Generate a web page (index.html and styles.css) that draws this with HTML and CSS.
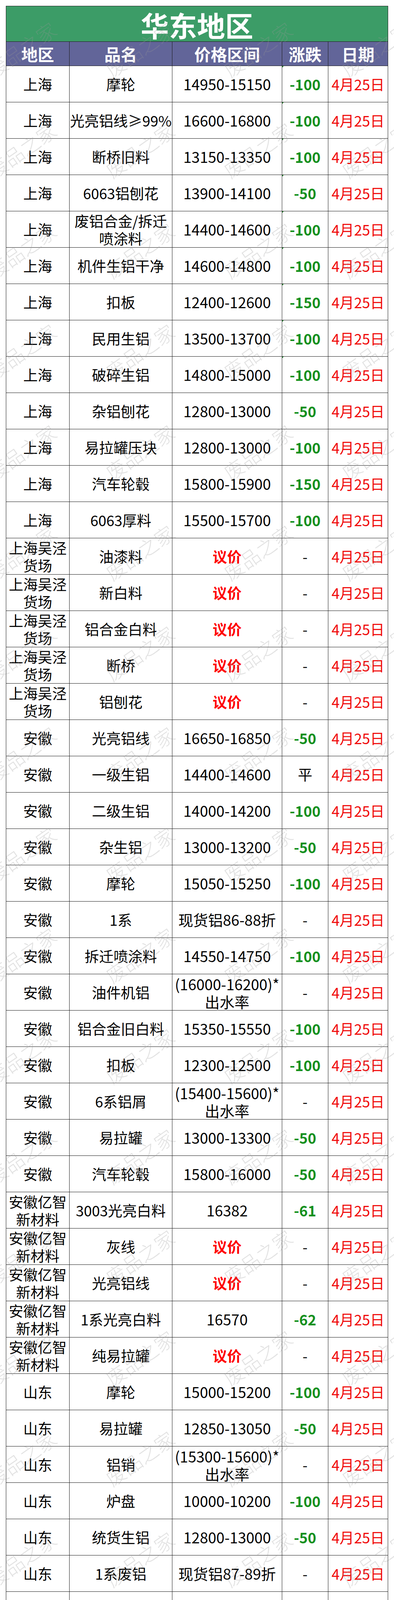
FILE: index.html
```html
<!DOCTYPE html>
<html lang="zh-CN">
<head>
<meta charset="utf-8">
<title>华东地区</title>
<link rel="stylesheet" href="styles.css">
</head>
<body>
<div class="page">
  <div class="sheet">
    <div class="title">华东地区</div>
    <div class="row head"><div class="c">地区</div><div class="c">品名</div><div class="c">价格区间</div><div class="c">涨跌</div><div class="c">日期</div></div>

    <div class="row"><div class="c">上海</div><div class="c">摩轮</div><div class="c v">14950-15150</div><div class="c g tri">-100</div><div class="c t">4月25日</div></div>
    <div class="row"><div class="c">上海</div><div class="c">光亮铝线≥99%</div><div class="c v">16600-16800</div><div class="c g tri">-100</div><div class="c t">4月25日</div></div>
    <div class="row"><div class="c">上海</div><div class="c">断桥旧料</div><div class="c v">13150-13350</div><div class="c g tri">-100</div><div class="c t">4月25日</div></div>
    <div class="row"><div class="c">上海</div><div class="c">6063铝刨花</div><div class="c v">13900-14100</div><div class="c g tri">-50</div><div class="c t">4月25日</div></div>
    <div class="row"><div class="c">上海</div><div class="c m">废铝合金/拆迁<br>喷涂料</div><div class="c v">14400-14600</div><div class="c g tri">-100</div><div class="c t">4月25日</div></div>
    <div class="row"><div class="c">上海</div><div class="c">机件生铝干净</div><div class="c v">14600-14800</div><div class="c g tri">-100</div><div class="c t">4月25日</div></div>
    <div class="row"><div class="c">上海</div><div class="c">扣板</div><div class="c v">12400-12600</div><div class="c g tri">-150</div><div class="c t">4月25日</div></div>
    <div class="row"><div class="c">上海</div><div class="c">民用生铝</div><div class="c v">13500-13700</div><div class="c g tri">-100</div><div class="c t">4月25日</div></div>
    <div class="row"><div class="c">上海</div><div class="c">破碎生铝</div><div class="c v">14800-15000</div><div class="c g tri">-100</div><div class="c t">4月25日</div></div>
    <div class="row"><div class="c">上海</div><div class="c">杂铝刨花</div><div class="c v">12800-13000</div><div class="c g">-50</div><div class="c t">4月25日</div></div>
    <div class="row"><div class="c">上海</div><div class="c">易拉罐压块</div><div class="c v">12800-13000</div><div class="c g">-100</div><div class="c t">4月25日</div></div>
    <div class="row"><div class="c">上海</div><div class="c">汽车轮毂</div><div class="c v">15800-15900</div><div class="c g">-150</div><div class="c t">4月25日</div></div>
    <div class="row"><div class="c">上海</div><div class="c">6063厚料</div><div class="c v">15500-15700</div><div class="c g">-100</div><div class="c t">4月25日</div></div>
    <div class="row"><div class="c m">上海吴泾<br>货场</div><div class="c">油漆料</div><div class="c y">议价</div><div class="c">-</div><div class="c t">4月25日</div></div>
    <div class="row"><div class="c m">上海吴泾<br>货场</div><div class="c">新白料</div><div class="c y">议价</div><div class="c">-</div><div class="c t">4月25日</div></div>
    <div class="row"><div class="c m">上海吴泾<br>货场</div><div class="c">铝合金白料</div><div class="c y">议价</div><div class="c">-</div><div class="c t">4月25日</div></div>
    <div class="row"><div class="c m">上海吴泾<br>货场</div><div class="c">断桥</div><div class="c y">议价</div><div class="c">-</div><div class="c t">4月25日</div></div>
    <div class="row"><div class="c m">上海吴泾<br>货场</div><div class="c">铝刨花</div><div class="c y">议价</div><div class="c">-</div><div class="c t">4月25日</div></div>
    <div class="row"><div class="c">安徽</div><div class="c">光亮铝线</div><div class="c v">16650-16850</div><div class="c g">-50</div><div class="c t">4月25日</div></div>
    <div class="row"><div class="c">安徽</div><div class="c">一级生铝</div><div class="c v">14400-14600</div><div class="c">平</div><div class="c t">4月25日</div></div>
    <div class="row"><div class="c">安徽</div><div class="c">二级生铝</div><div class="c v">14000-14200</div><div class="c g">-100</div><div class="c t">4月25日</div></div>
    <div class="row"><div class="c">安徽</div><div class="c">杂生铝</div><div class="c v">13000-13200</div><div class="c g">-50</div><div class="c t">4月25日</div></div>
    <div class="row"><div class="c">安徽</div><div class="c">摩轮</div><div class="c v">15050-15250</div><div class="c g">-100</div><div class="c t">4月25日</div></div>
    <div class="row"><div class="c">安徽</div><div class="c">1系</div><div class="c v">现货铝86-88折</div><div class="c">-</div><div class="c t">4月25日</div></div>
    <div class="row"><div class="c">安徽</div><div class="c">拆迁喷涂料</div><div class="c v">14550-14750</div><div class="c g">-100</div><div class="c t">4月25日</div></div>
    <div class="row"><div class="c">安徽</div><div class="c">油件机铝</div><div class="c v m">(16000-16200)*<br>出水率</div><div class="c">-</div><div class="c t">4月25日</div></div>
    <div class="row"><div class="c">安徽</div><div class="c">铝合金旧白料</div><div class="c v">15350-15550</div><div class="c g">-100</div><div class="c t">4月25日</div></div>
    <div class="row"><div class="c">安徽</div><div class="c">扣板</div><div class="c v">12300-12500</div><div class="c g">-100</div><div class="c t">4月25日</div></div>
    <div class="row"><div class="c">安徽</div><div class="c">6系铝屑</div><div class="c v m">(15400-15600)*<br>出水率</div><div class="c">-</div><div class="c t">4月25日</div></div>
    <div class="row"><div class="c">安徽</div><div class="c">易拉罐</div><div class="c v">13000-13300</div><div class="c g">-50</div><div class="c t">4月25日</div></div>
    <div class="row"><div class="c">安徽</div><div class="c">汽车轮毂</div><div class="c v">15800-16000</div><div class="c g">-50</div><div class="c t">4月25日</div></div>
    <div class="row"><div class="c m">安徽亿智<br>新材料</div><div class="c">3003光亮白料</div><div class="c v">16382</div><div class="c g">-61</div><div class="c t">4月25日</div></div>
    <div class="row"><div class="c m">安徽亿智<br>新材料</div><div class="c">灰线</div><div class="c y">议价</div><div class="c">-</div><div class="c t">4月25日</div></div>
    <div class="row"><div class="c m">安徽亿智<br>新材料</div><div class="c">光亮铝线</div><div class="c y">议价</div><div class="c">-</div><div class="c t">4月25日</div></div>
    <div class="row"><div class="c m">安徽亿智<br>新材料</div><div class="c">1系光亮白料</div><div class="c v">16570</div><div class="c g">-62</div><div class="c t">4月25日</div></div>
    <div class="row"><div class="c m">安徽亿智<br>新材料</div><div class="c">纯易拉罐</div><div class="c y">议价</div><div class="c">-</div><div class="c t">4月25日</div></div>
    <div class="row"><div class="c">山东</div><div class="c">摩轮</div><div class="c v">15000-15200</div><div class="c g">-100</div><div class="c t">4月25日</div></div>
    <div class="row"><div class="c">山东</div><div class="c">易拉罐</div><div class="c v">12850-13050</div><div class="c g">-50</div><div class="c t">4月25日</div></div>
    <div class="row"><div class="c">山东</div><div class="c">铝销</div><div class="c v m">(15300-15600)*<br>出水率</div><div class="c">-</div><div class="c t">4月25日</div></div>
    <div class="row"><div class="c">山东</div><div class="c">炉盘</div><div class="c v">10000-10200</div><div class="c g">-100</div><div class="c t">4月25日</div></div>
    <div class="row"><div class="c">山东</div><div class="c">统货生铝</div><div class="c v">12800-13000</div><div class="c g">-50</div><div class="c t">4月25日</div></div>
    <div class="row"><div class="c">山东</div><div class="c">1系废铝</div><div class="c v">现货铝87-89折</div><div class="c">-</div><div class="c t">4月25日</div></div>
    <div class="row"><div class="c">山东临沂</div><div class="c">活塞</div><div class="c v">15000-15200</div><div class="c g">-100</div><div class="c t">4月25日</div></div>
    <div class="row"><div class="c">山东临沂</div><div class="c">拆迁喷涂料</div><div class="c v">14450-14650</div><div class="c g">-50</div><div class="c t">4月25日</div></div>
    <div class="row"><div class="c">山东临沂</div><div class="c">机铝(摩托)</div><div class="c v">14250-14450</div><div class="c g">-50</div><div class="c t">4月25日</div></div>
    <div class="row"><div class="c">山东临沂</div><div class="c">6063合金厚料</div><div class="c v">15550-15750</div><div class="c g">-50</div><div class="c t">4月25日</div></div>
    <div class="row"><div class="c">山东临沂</div><div class="c">光亮铝线</div><div class="c v">16600-16800</div><div class="c">平</div><div class="c t">4月25日</div></div>
    <div class="row"><div class="c">江苏</div><div class="c">铝合金旧白料</div><div class="c v">15150-15350</div><div class="c g">-100</div><div class="c t">4月25日</div></div>
    <div class="row"><div class="c">江苏</div><div class="c">摩轮</div><div class="c v">15000-15200</div><div class="c g">-100</div><div class="c t">4月25日</div></div>
    <div class="row"><div class="c">江苏</div><div class="c">7系铝屑</div><div class="c v m">(14600-14800)*<br>出水率</div><div class="c">-</div><div class="c t">4月25日</div></div>
    <div class="row"><div class="c">江苏</div><div class="c">破碎杂机铝</div><div class="c v">14000-14200</div><div class="c g">-100</div><div class="c t">4月25日</div></div>
    <div class="row"><div class="c">江苏</div><div class="c">6063铝刨花</div><div class="c v">13850-14050</div><div class="c g">-100</div><div class="c t">4月25日</div></div>
    <div class="row"><div class="c">江苏</div><div class="c">喷涂拆迁旧料</div><div class="c v">14400-14600</div><div class="c g">-100</div><div class="c t">4月25日</div></div>
    <div class="row"><div class="c">江苏</div><div class="c">缸体/缸盖</div><div class="c v">14900-15100</div><div class="c g">-100</div><div class="c t">4月25日</div></div>
    <div class="row"><div class="c">江苏</div><div class="c">油件机铝</div><div class="c v">13100-13300</div><div class="c">平</div><div class="c t">4月25日</div></div>
    <div class="row"><div class="c">江苏</div><div class="c">断桥旧料</div><div class="c v">13200-13400</div><div class="c g">-100</div><div class="c t">4月25日</div></div>
    <div class="row"><div class="c">江苏</div><div class="c">破碎熟铝</div><div class="c v">14700-14900</div><div class="c g">-100</div><div class="c t">4月25日</div></div>
    <div class="row"><div class="c">江苏</div><div class="c">易拉罐压块</div><div class="c v">12900-13100</div><div class="c g">-50</div><div class="c t">4月25日</div></div>
    <div class="row"><div class="c">江苏</div><div class="c">活塞</div><div class="c v">15000-15200</div><div class="c g">-100</div><div class="c t">4月25日</div></div>
    <div class="row"><div class="c">江苏</div><div class="c">混合合金屑</div><div class="c v m">(14900-15100)*<br>出水率</div><div class="c">-</div><div class="c t">4月25日</div></div>
    <div class="row"><div class="c">江苏</div><div class="c">机生铝不带油</div><div class="c v">14400-14600</div><div class="c g">-100</div><div class="c t">4月25日</div></div>
    <div class="row"><div class="c m">泰州南元<br>铝材</div><div class="c">3003新白料</div><div class="c v">现货铝86-87折</div><div class="c">-</div><div class="c t">4月25日</div></div>
    <div class="row"><div class="c m">泰州南元<br>铝材</div><div class="c">6系氧化料</div><div class="c v">现货铝86-87折</div><div class="c">-</div><div class="c t">4月25日</div></div>
    <div class="row"><div class="c m">泰州南元<br>铝材</div><div class="c">6系喷涂料</div><div class="c v">现货铝86-87折</div><div class="c">-</div><div class="c t">4月25日</div></div>
    <div class="row"><div class="c m">泰州南元<br>铝材</div><div class="c">6063新白料</div><div class="c v">现货铝86-87折</div><div class="c">-</div><div class="c t">4月25日</div></div>
    <div class="row"><div class="c m">泰州南元<br>铝材</div><div class="c">6系新白料带票</div><div class="c y">议价</div><div class="c">-</div><div class="c t">4月25日</div></div>
    <div class="row"><div class="c m">泰州南元<br>铝材</div><div class="c">6061新白料</div><div class="c v">现货铝86-87折</div><div class="c">-</div><div class="c t">4月25日</div></div>
    <div class="row"><div class="c m">泰州南元<br>铝材</div><div class="c">1100新白料</div><div class="c v">现货铝86-87折</div><div class="c">-</div><div class="c t">4月25日</div></div>
    <div class="row"><div class="c m">泰州南元<br>铝材</div><div class="c m">1060及1070新<br>白料</div><div class="c v">现货铝86-87折</div><div class="c">-</div><div class="c t">4月25日</div></div>
    <div class="row"><div class="c">江西</div><div class="c">易拉罐</div><div class="c v">13100-13300</div><div class="c g">-100</div><div class="c t">4月25日</div></div>
    <div class="row"><div class="c">江西</div><div class="c">民用生铝</div><div class="c v">14300-14500</div><div class="c g">-100</div><div class="c t">4月25日</div></div>
    <div class="row"><div class="c">江西</div><div class="c">摩轮</div><div class="c v">15000-15200</div><div class="c g">-100</div><div class="c t">4月25日</div></div>
    <div class="row"><div class="c">江西</div><div class="c">熟杂铝</div><div class="c v">13450-13650</div><div class="c">平</div><div class="c t">4月25日</div></div>
    <div class="row"><div class="c">江西</div><div class="c">汽车轮毂</div><div class="c v">15800-16000</div><div class="c g">-100</div><div class="c t">4月25日</div></div>
    <div class="row"><div class="c">江西</div><div class="c">机铝</div><div class="c v">14500-14700</div><div class="c g">-100</div><div class="c t">4月25日</div></div>
    <div class="row"><div class="c">江西</div><div class="c">铝合金旧白料</div><div class="c v">15200-15400</div><div class="c g">-100</div><div class="c t">4月25日</div></div>
    <div class="row"><div class="c">江西</div><div class="c">拆迁喷涂料</div><div class="c v">14550-14750</div><div class="c g">-100</div><div class="c t">4月25日</div></div>
    <div class="row"><div class="c">江西</div><div class="c">铝屑</div><div class="c v m">(15500-15700)*<br>出水率</div><div class="c">-</div><div class="c t">4月25日</div></div>
    <div class="row"><div class="c">江西</div><div class="c">破碎熟铝</div><div class="c v">14400-14600</div><div class="c g tri">-50</div><div class="c t">4月25日</div></div>
    <div class="row"><div class="c">江西</div><div class="c">机体</div><div class="c v">15300-15500</div><div class="c g tri">-100</div><div class="c t">4月25日</div></div>
    <div class="row"><div class="c">江西</div><div class="c">光亮铝线≥99%</div><div class="c v">16650-16850</div><div class="c g tri">-50</div><div class="c t">4月25日</div></div>
    <div class="row"><div class="c">江西</div><div class="c">活塞</div><div class="c v">15000-15200</div><div class="c g tri">-100</div><div class="c t">4月25日</div></div>
    <div class="row"><div class="c">江西</div><div class="c">铝卷门</div><div class="c v">13000-13200</div><div class="c g tri">-100</div><div class="c t">4月25日</div></div>
    <div class="row"><div class="c">江西</div><div class="c">破碎生铝</div><div class="c v">14700-14900</div><div class="c g tri">-100</div><div class="c t">4月25日</div></div>
  </div>

  <div class="wm" aria-hidden="true">
    <div class="wm-row"><span>废品之家</span><span>废品之家</span><span>废品之家</span><span>废品之家</span></div>
    <div class="wm-row"><span>废品之家</span><span>废品之家</span><span>废品之家</span><span>废品之家</span></div>
    <div class="wm-row"><span>废品之家</span><span>废品之家</span><span>废品之家</span><span>废品之家</span></div>
    <div class="wm-row"><span>废品之家</span><span>废品之家</span><span>废品之家</span><span>废品之家</span></div>
    <div class="wm-row"><span>废品之家</span><span>废品之家</span><span>废品之家</span><span>废品之家</span></div>
    <div class="wm-row"><span>废品之家</span><span>废品之家</span><span>废品之家</span><span>废品之家</span></div>
    <div class="wm-row"><span>废品之家</span><span>废品之家</span><span>废品之家</span><span>废品之家</span></div>
    <div class="wm-row"><span>废品之家</span><span>废品之家</span><span>废品之家</span><span>废品之家</span></div>
    <div class="wm-row"><span>废品之家</span><span>废品之家</span><span>废品之家</span><span>废品之家</span></div>
    <div class="wm-row"><span>废品之家</span><span>废品之家</span><span>废品之家</span><span>废品之家</span></div>
    <div class="wm-row"><span>废品之家</span><span>废品之家</span><span>废品之家</span><span>废品之家</span></div>
    <div class="wm-row"><span>废品之家</span><span>废品之家</span><span>废品之家</span><span>废品之家</span></div>
    <div class="wm-row"><span>废品之家</span><span>废品之家</span><span>废品之家</span><span>废品之家</span></div>
    <div class="wm-row"><span>废品之家</span><span>废品之家</span><span>废品之家</span><span>废品之家</span></div>
    <div class="wm-row"><span>废品之家</span><span>废品之家</span><span>废品之家</span><span>废品之家</span></div>
    <div class="wm-row"><span>废品之家</span><span>废品之家</span><span>废品之家</span><span>废品之家</span></div>
    <div class="wm-row"><span>废品之家</span><span>废品之家</span><span>废品之家</span><span>废品之家</span></div>
    <div class="wm-row"><span>废品之家</span><span>废品之家</span><span>废品之家</span><span>废品之家</span></div>
    <div class="wm-row"><span>废品之家</span><span>废品之家</span><span>废品之家</span><span>废品之家</span></div>
    <div class="wm-row"><span>废品之家</span><span>废品之家</span><span>废品之家</span><span>废品之家</span></div>
    <div class="wm-row"><span>废品之家</span><span>废品之家</span><span>废品之家</span><span>废品之家</span></div>
    <div class="wm-row"><span>废品之家</span><span>废品之家</span><span>废品之家</span><span>废品之家</span></div>
    <div class="wm-row"><span>废品之家</span><span>废品之家</span><span>废品之家</span><span>废品之家</span></div>
    <div class="wm-row"><span>废品之家</span><span>废品之家</span><span>废品之家</span><span>废品之家</span></div>
    <div class="wm-row"><span>废品之家</span><span>废品之家</span><span>废品之家</span><span>废品之家</span></div>
    <div class="wm-row"><span>废品之家</span><span>废品之家</span><span>废品之家</span><span>废品之家</span></div>
    <div class="wm-row"><span>废品之家</span><span>废品之家</span><span>废品之家</span><span>废品之家</span></div>
    <div class="wm-row"><span>废品之家</span><span>废品之家</span><span>废品之家</span><span>废品之家</span></div>
    <div class="wm-row"><span>废品之家</span><span>废品之家</span><span>废品之家</span><span>废品之家</span></div>
    <div class="wm-row"><span>废品之家</span><span>废品之家</span><span>废品之家</span><span>废品之家</span></div>
    <div class="wm-row"><span>废品之家</span><span>废品之家</span><span>废品之家</span><span>废品之家</span></div>
  </div>
</div>
</body>
</html>
```

FILE: styles.css
```css
* { box-sizing: border-box; }

html, body {
  margin: 0;
  padding: 0;
  background: #ffffff;
}

body {
  font-family: "Noto Sans CJK SC", "Noto Sans", "DejaVu Sans", sans-serif;
  color: #000;
}

.page {
  position: relative;
  width: 1008px;
  height: 7996px;
  padding: 15px 15px 0 15px;
  overflow: hidden;
}

.sheet {
  width: 978px;
  border-left: 1px solid #1c1c1c;
  border-top: 1px solid #1c1c1c;
}

.title {
  height: 91px;
  background: #3c9c67;
  color: #ffffff;
  font-size: 72px;
  font-weight: 700;
  line-height: 1;
  display: flex;
  align-items: center;
  justify-content: center;
  padding-top: 4px;
  border-right: 1px solid #1c1c1c;
  border-bottom: 1px solid #1c1c1c;
}

.row {
  display: grid;
  grid-template-columns: 162px 263px 281px 118px 153px;
  height: 93px;
}

.c {
  position: relative;
  display: flex;
  align-items: center;
  justify-content: center;
  text-align: center;
  border-right: 1px solid #1c1c1c;
  border-bottom: 1px solid #1c1c1c;
  padding: 0 2px;
  font-size: 37px;
  line-height: 46px;
  white-space: nowrap;
  color: #000;
}

.c.m {
  line-height: 45px;
  padding-top: 2px;
}

.head {
  height: 62px;
  background: #626599;
}

.head .c {
  color: #ffffff;
  font-size: 42px;
  font-weight: 700;
  line-height: 1;
}

.v { font-size: 38px; }

.g {
  color: #14901e;
  font-weight: 700;
}

.y {
  color: #ff0000;
  font-weight: 700;
}

.t { color: #f00a0a; }

.tri::before {
  content: "";
  position: absolute;
  top: 0;
  left: 0;
  border-top: 4px solid #1f8a2a;
  border-right: 4px solid transparent;
}

/* faint diagonal watermark layer */
.wm {
  position: absolute;
  top: 0;
  left: 0;
  width: 1008px;
  height: 7996px;
  overflow: hidden;
  pointer-events: none;
}

.wm-row {
  height: 257.7px;
  display: grid;
  grid-template-columns: repeat(4, 302px);
  align-items: center;
  margin-left: -96px;
}

.wm-row:first-child {
  margin-top: -4px;
}

.wm-row span {
  display: block;
  text-align: center;
  font-size: 50px;
  font-weight: 300;
  line-height: 1;
  color: rgba(150, 150, 150, 0.28);
  transform: rotate(-35deg);
  white-space: nowrap;
}
```
